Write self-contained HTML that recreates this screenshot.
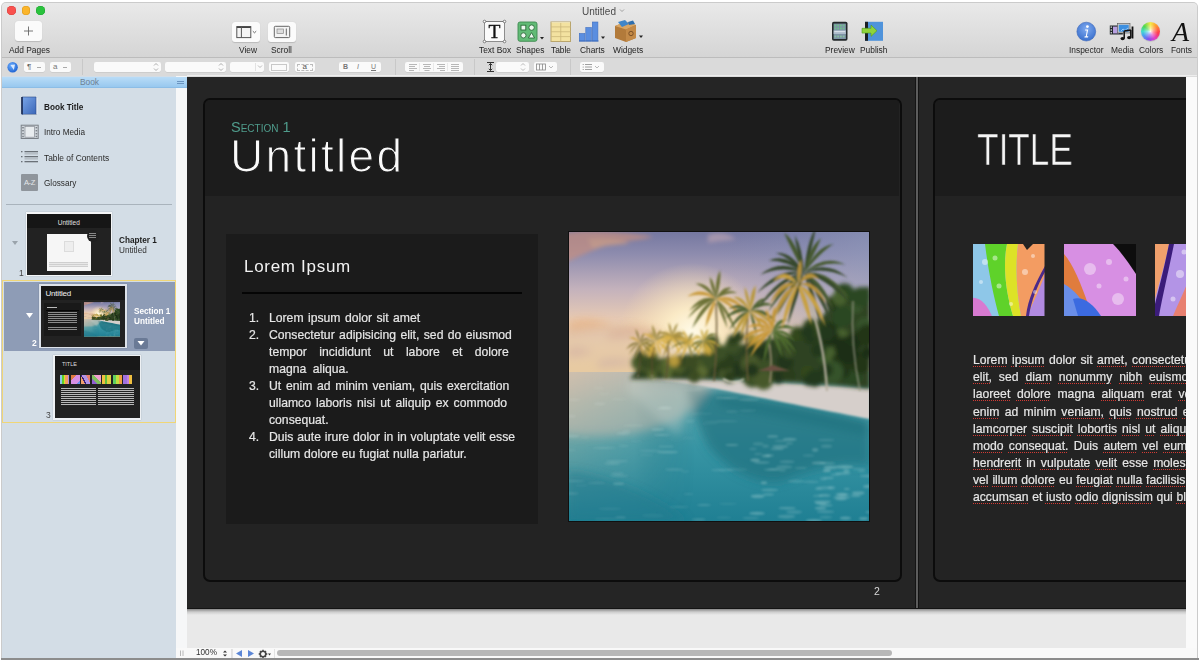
<!DOCTYPE html>
<html><head><meta charset="utf-8">
<style>
*{margin:0;padding:0;box-sizing:border-box}
html,body{width:1200px;height:660px;overflow:hidden;background:#fff}
body{font-family:"Liberation Sans",sans-serif;position:relative}
.a{position:absolute}
.lbl{position:absolute;font-size:8.4px;line-height:10px;color:#1e1e1e;white-space:nowrap;top:45px}
.btn{position:absolute;background:#fbfbfb;border-radius:3px;box-shadow:0 .5px 1px rgba(0,0,0,.15)}
.fbx{position:absolute;background:#fafafa;border-radius:2px;height:10px;top:62px;box-shadow:0 .5px .5px rgba(0,0,0,.12)}
.sep{position:absolute;width:1px;height:16px;top:59px;background:#c8c8c8}
.sb{position:absolute;font-size:8.2px;line-height:10px;color:#2a2a2a;white-space:nowrap}
.lbl,.sb,.w,.tx{will-change:transform}
.w{position:absolute;white-space:nowrap;line-height:1;-webkit-text-stroke:.2px currentColor}
.w u{text-decoration:underline dotted #d23a34;text-decoration-thickness:1px;text-underline-offset:2px}
</style></head><body>
<!-- window frame -->
<div class="a" style="left:1px;top:2px;width:1197px;height:658px;background:#cbcbcb;border-radius:5px 5px 0 0"></div>
<div class="a" style="left:2px;top:3px;width:1195px;height:656px;background:#dcdcdc;border-radius:4px 4px 0 0;overflow:hidden">
</div>
<!-- toolbar -->
<div id="tb" class="a" style="left:2px;top:3px;width:1195px;height:54px;background:linear-gradient(#e9e9e9,#d5d5d5);border-radius:4px 4px 0 0"></div>
<div class="a" style="left:2px;top:57px;width:1195px;height:1px;background:#bcbcbc"></div>

<!-- traffic lights -->
<div class="a" style="left:7.4px;top:6px;width:8.6px;height:8.6px;border-radius:50%;background:#f9514e;box-shadow:inset 0 0 0 .6px #d8403d"></div>
<div class="a" style="left:21.8px;top:6px;width:8.6px;height:8.6px;border-radius:50%;background:#fbb52a;box-shadow:inset 0 0 0 .6px #dc9a1e"></div>
<div class="a" style="left:36.2px;top:6px;width:8.6px;height:8.6px;border-radius:50%;background:#2ac33d;box-shadow:inset 0 0 0 .6px #1ea42f"></div>
<div class="a tx" style="left:569px;top:5.5px;width:60px;font-size:10px;line-height:12px;color:#4a4a4a;text-align:center">Untitled</div>
<svg class="a" style="left:619px;top:8px" width="6" height="5"><path d="M1 1.5 L3 3.5 L5 1.5" fill="none" stroke="#999" stroke-width=".9"/></svg>
<!-- Add pages -->
<div class="btn" style="left:15.3px;top:21.4px;width:26.3px;height:19.5px"></div>
<svg class="a" style="left:15px;top:21px" width="27" height="20"><path d="M13.5 5.5 V14.5 M9 10 H18" stroke="#666" stroke-width=".9"/></svg>
<div class="lbl" style="left:8.5px">Add Pages</div>
<!-- View / Scroll -->
<div class="btn" style="left:232.2px;top:21.5px;width:28px;height:20.4px"></div>
<svg class="a" style="left:232px;top:21px" width="29" height="21"><rect x="4.8" y="5.6" width="14" height="11" fill="#f4f4f4" stroke="#555" stroke-width="1"/><path d="M4.8 6.2 H18.8" stroke="#444" stroke-width="1.6"/><path d="M9.4 5.6 V16.6" stroke="#555" stroke-width="1"/><path d="M20.8 10.2 L22.5 11.8 L24.2 10.2" fill="none" stroke="#555" stroke-width=".9"/></svg>
<div class="lbl" style="left:238.6px">View</div>
<div class="btn" style="left:268.3px;top:21.5px;width:28px;height:20.4px"></div>
<svg class="a" style="left:268px;top:21px" width="29" height="21"><rect x="6.3" y="5.3" width="15.4" height="11.3" rx="1" fill="#f4f4f4" stroke="#666" stroke-width="1"/><rect x="9" y="8" width="6.5" height="4.5" fill="#ddd" stroke="#888" stroke-width=".7"/><path d="M18.3 7.5 V14.5" stroke="#666" stroke-width="1"/></svg>
<div class="lbl" style="left:270.5px">Scroll</div>
<!-- Text Box -->
<svg class="a" style="left:482px;top:19px" width="25" height="25"><rect x="2.5" y="2.5" width="20" height="20" fill="#fafafa" stroke="#777" stroke-width=".8"/><path d="M2.5 2.5 H22.5" stroke="#777" stroke-width=".8"/><g fill="#fff" stroke="#555" stroke-width=".7"><circle cx="2.5" cy="2.5" r="1.3"/><circle cx="22.5" cy="2.5" r="1.3"/><circle cx="2.5" cy="22.5" r="1.3"/><circle cx="22.5" cy="22.5" r="1.3"/></g><text x="12.5" y="19" text-anchor="middle" font-family="Liberation Serif" font-size="19.5" fill="#111" stroke="#111" stroke-width=".35">T</text></svg>
<div class="lbl" style="left:478.6px">Text Box</div>
<!-- Shapes -->
<svg class="a" style="left:517px;top:21px" width="28" height="22"><rect x="1" y="1" width="19" height="19.3" rx="2" fill="#62bb76" stroke="#3f8a50" stroke-width=".9"/><g fill="#eef8f0" stroke="#2d6a3a" stroke-width=".9"><rect x="4" y="4.2" width="4.8" height="4.8"/><circle cx="14.6" cy="6.6" r="2.7"/><circle cx="6.4" cy="14.4" r="2.6"/><path d="M14.5 11.6 L17.6 17 H11.4 Z"/></g><path d="M23 16 H27 L25 18.5 Z" fill="#222"/></svg>
<div class="lbl" style="left:516.1px">Shapes</div>
<!-- Table -->
<svg class="a" style="left:550px;top:21px" width="22" height="22"><rect x="1" y="1" width="19.5" height="19.5" fill="#f3e2a0" stroke="#b9a56c" stroke-width="1"/><g stroke="#cbb77a" stroke-width=".8"><path d="M10.75 1 V20.5"/><path d="M1 5.9 H20.5 M1 10.75 H20.5 M1 15.6 H20.5"/></g><path d="M1.5 1.5 H20" stroke="#fff6d0" stroke-width=".6"/></svg>
<div class="lbl" style="left:551px">Table</div>
<!-- Charts -->
<svg class="a" style="left:578px;top:20px" width="30" height="23"><g fill="#5a8ee0" stroke="#3f6fc0" stroke-width=".6"><rect x="1.3" y="13.5" width="5.6" height="7.5"/><rect x="7.8" y="7.5" width="5.6" height="13.5"/><rect x="14.3" y="2" width="5.6" height="19"/></g><rect x="1" y="20.5" width="19.5" height="1" fill="#3f6fc0"/><path d="M23 16.5 H27 L25 19 Z" fill="#222"/></svg>
<div class="lbl" style="left:579.5px">Charts</div>
<!-- Widgets -->
<svg class="a" style="left:613px;top:19px" width="32" height="25"><path d="M2 7 L12 3 L23 6 L23 19 L13 23 L2 19 Z" fill="#b27a3a"/><path d="M2 7 L13 10.5 L23 6 L12 3 Z" fill="#d9a664"/><path d="M13 10.5 V23 L23 19 V6 Z" fill="#c38a48"/><path d="M5 3 L12 1 L16 5 L9 8 Z" fill="#3f86c9"/><path d="M15 3 L20 1.5 L22 5 L16 6 Z" fill="#2f6fae"/><circle cx="18" cy="14.5" r="2.2" fill="none" stroke="#6b4420" stroke-width=".8"/><path d="M26 16.5 H30 L28 19 Z" fill="#222"/></svg>
<div class="lbl" style="left:612.5px">Widgets</div>
<!-- Preview -->
<svg class="a" style="left:831px;top:21px" width="18" height="21"><rect x="1" y=".8" width="15.5" height="19" rx="1.8" fill="#23282a"/><rect x="2.6" y="2.6" width="12.3" height="15.4" fill="#7d93a6"/><rect x="3.4" y="3.6" width="1.8" height="1.8" fill="#6fbf8a"/><rect x="6.2" y="3.6" width="1.8" height="1.8" fill="#6fbf8a"/><rect x="9.0" y="3.6" width="1.8" height="1.8" fill="#6fbf8a"/><rect x="11.8" y="3.6" width="1.8" height="1.8" fill="#6fbf8a"/><rect x="3.4" y="6.6" width="1.8" height="1.8" fill="#6fbf8a"/><rect x="6.2" y="6.6" width="1.8" height="1.8" fill="#6fbf8a"/><rect x="9.0" y="6.6" width="1.8" height="1.8" fill="#6fbf8a"/><rect x="11.8" y="6.6" width="1.8" height="1.8" fill="#6fbf8a"/><rect x="3.4" y="14.6" width="1.8" height="1.8" fill="#8ac0a0"/><rect x="6.2" y="14.6" width="1.8" height="1.8" fill="#8ac0a0"/><rect x="9.0" y="14.6" width="1.8" height="1.8" fill="#8ac0a0"/><rect x="11.8" y="14.6" width="1.8" height="1.8" fill="#8ac0a0"/><rect x="2.6" y="9.4" width="12.3" height="3.6" fill="#aebccb"/><rect x="3.3" y="10.3" width="10.8" height=".8" fill="#e8eef4"/></svg>
<div class="lbl" style="left:825px">Preview</div>
<!-- Publish -->
<svg class="a" style="left:861px;top:21px" width="24" height="21"><rect x="4" y=".8" width="18" height="19" fill="#4f93db"/><rect x="4" y=".8" width="3" height="19" fill="#1b1f22"/><path d="M1 7.3 H10 V4 L16 9.7 L10 15.4 V12.1 H1 Z" fill="#8fd43a" stroke="#4f9a1e" stroke-width=".6"/></svg>
<div class="lbl" style="left:860.3px">Publish</div>
<!-- Inspector -->
<svg class="a" style="left:1076px;top:21px" width="21" height="21"><defs><radialGradient id="ig" cx=".5" cy=".35" r=".6"><stop offset="0" stop-color="#7faaf0"/><stop offset="1" stop-color="#3f74cf"/></radialGradient></defs><circle cx="10.3" cy="10.6" r="9.4" fill="url(#ig)" stroke="#3a66b8" stroke-width=".6"/><circle cx="11.4" cy="5.6" r="1.4" fill="#fff"/><path d="M9.2 8.4 H12.2 L10.8 15.3 H12.3 L12 16.4 H8.4 L8.7 15.3 H9.8 L10.8 9.5 H9 Z" fill="#fff"/></svg>
<div class="lbl" style="left:1069.3px">Inspector</div>
<!-- Media -->
<svg class="a" style="left:1109px;top:22px" width="26" height="20"><rect x=".8" y="3.5" width="13" height="9" fill="#22282c"/><g fill="#e8e8e8"><rect x="1.6" y="4.5" width="1.4" height="1.2"/><rect x="1.6" y="7.4" width="1.4" height="1.2"/><rect x="1.6" y="10.2" width="1.4" height="1.2"/></g><rect x="4" y="4.6" width="6" height="6.8" fill="#b8a0e0"/><rect x="8.5" y="1.5" width="12.5" height="9.5" fill="#c8c8c8" stroke="#555" stroke-width=".6"/><rect x="9.8" y="2.8" width="9.9" height="6.9" fill="#3c8fe0"/><path d="M12 9 L14 7 L16 8.5 L19 6" stroke="#bfe0ff" stroke-width=".7" fill="none"/><path d="M15.2 9 V16.5 M21.8 8 V15.5 M15.2 9 L21.8 8" stroke="#111" stroke-width="1.5" fill="none"/><ellipse cx="13.6" cy="16.6" rx="2.1" ry="1.6" fill="#111"/><ellipse cx="20.2" cy="15.6" rx="2.1" ry="1.6" fill="#111"/><rect x="22.6" y="4.5" width="1.8" height="12" fill="#111"/></svg>
<div class="lbl" style="left:1110.5px">Media</div>
<!-- Colors -->
<div class="a" style="left:1140.6px;top:21.8px;width:19.6px;height:19.6px;border-radius:50%;background:radial-gradient(circle,rgba(255,255,255,.9) 0,rgba(255,255,255,.4) 25%,rgba(255,255,255,0) 55%),conic-gradient(from 0deg,#f5e84a,#ffa030 40deg,#ff3b4e 100deg,#e040c8 150deg,#8050f0 195deg,#4aa0f0 240deg,#40d8d0 270deg,#50d850 310deg,#f5e84a 360deg);box-shadow:0 .5px 1px rgba(0,0,0,.2)"></div>
<div class="lbl" style="left:1139px">Colors</div>
<!-- Fonts -->
<div class="a" style="left:1170.5px;top:18px;width:20px;font-family:'Liberation Serif',serif;font-style:italic;font-size:28px;line-height:28px;color:#111;text-align:center">A</div>
<div class="lbl" style="left:1170.5px">Fonts</div>

<!-- format bar -->
<div class="a" style="left:2px;top:58px;width:1195px;height:18px;background:#dadada"></div>
<div class="a" style="left:187px;top:75px;width:1010px;height:1.2px;background:#ededed"></div>

<div class="sep" style="left:82px"></div>
<svg class="a" style="left:7px;top:61px" width="12" height="12"><defs><radialGradient id="gl" cx=".4" cy=".35" r=".7"><stop offset="0" stop-color="#6fb0ff"/><stop offset="1" stop-color="#1a5fd0"/></radialGradient></defs><circle cx="5.6" cy="6.3" r="5.2" fill="url(#gl)"/><path d="M3.5 4 L8 3.5 L6.8 9 Z" fill="#e8f2ff" opacity=".9"/></svg>
<div class="fbx" style="left:24.2px;width:20.8px"></div>
<div class="a" style="left:27px;top:61.5px;font-size:8px;color:#666">&para;</div>
<div class="a" style="left:37px;top:66.5px;width:4px;height:1px;background:#aaa"></div>
<div class="fbx" style="left:50px;width:20.8px"></div>
<div class="a" style="left:53px;top:61.5px;font-size:8px;color:#777">a</div>
<div class="a" style="left:63px;top:66.5px;width:4px;height:1px;background:#aaa"></div>
<div class="fbx" style="left:93.5px;width:67.3px"></div>
<div class="fbx" style="left:165.4px;width:60.4px"></div>
<svg class="a" style="left:153px;top:62px" width="6" height="10"><path d="M1 3.5 L3 1.5 L5 3.5 M1 6.5 L3 8.5 L5 6.5" fill="none" stroke="#999" stroke-width=".8"/></svg>
<svg class="a" style="left:218px;top:62px" width="6" height="10"><path d="M1 3.5 L3 1.5 L5 3.5 M1 6.5 L3 8.5 L5 6.5" fill="none" stroke="#999" stroke-width=".8"/></svg>
<div class="fbx" style="left:230px;width:34.4px"></div>
<div class="a" style="left:255px;top:63px;width:1px;height:8px;background:#e2e2e2"></div>
<svg class="a" style="left:257px;top:64px" width="6" height="5"><path d="M1 1.5 L3 3.5 L5 1.5" fill="none" stroke="#aaa" stroke-width=".8"/></svg>
<div class="fbx" style="left:268.5px;width:20.9px"></div>
<div class="a" style="left:271px;top:63.5px;width:16px;height:7px;border:1px solid #c8c8c8"></div>
<div class="fbx" style="left:294.6px;width:20.8px"></div>
<div class="a" style="left:297px;top:63.5px;width:16px;height:7px;border:1px dashed #bbb"></div>
<div class="a" style="left:302.5px;top:61.5px;font-size:8px;color:#555">a</div>
<div class="fbx" style="left:338.8px;width:42.5px"></div>
<div class="a" style="left:343px;top:62.5px;font-size:7px;color:#777;font-weight:bold">B</div>
<div class="a" style="left:357px;top:62.5px;font-size:7px;color:#777;font-style:italic">I</div>
<div class="a" style="left:371px;top:62.5px;font-size:7px;color:#777;text-decoration:underline">U</div>
<div class="sep" style="left:395px"></div>
<div class="fbx" style="left:405px;width:57.5px"></div>
<svg class="a" style="left:405px;top:62px" width="58" height="10"><g stroke="#999" stroke-width=".7"><path d="M4 2.5 H12 M4 4.5 H10 M4 6.5 H12 M4 8.5 H9"/><path d="M18 2.5 H26 M19 4.5 H25 M18 6.5 H26 M19.5 8.5 H24.5"/><path d="M32 2.5 H40 M34 4.5 H40 M32 6.5 H40 M35 8.5 H40"/><path d="M46 2.5 H54 M46 4.5 H54 M46 6.5 H54 M46 8.5 H54"/></g><g stroke="#e4e4e4" stroke-width=".8"><path d="M14.5 1 V9 M28.5 1 V9 M42.5 1 V9"/></g></svg>
<div class="sep" style="left:473.7px"></div>
<svg class="a" style="left:485px;top:61px" width="11" height="12"><path d="M2 1.5 H9 M2 10.5 H9 M5.5 2.5 V9.5 M3.8 4.2 L5.5 2.5 L7.2 4.2 M3.8 7.8 L5.5 9.5 L7.2 7.8" fill="none" stroke="#333" stroke-width="1"/></svg>
<div class="fbx" style="left:496px;width:32.7px"></div>
<svg class="a" style="left:520px;top:62px" width="6" height="10"><path d="M1 3.5 L3 1.5 L5 3.5 M1 6.5 L3 8.5 L5 6.5" fill="none" stroke="#aaa" stroke-width=".8"/></svg>
<div class="fbx" style="left:533.7px;width:23.8px"></div>
<svg class="a" style="left:535px;top:62px" width="22" height="10"><rect x="1.5" y="2" width="9" height="6" fill="none" stroke="#888" stroke-width=".8"/><path d="M4.5 2 V8 M7.5 2 V8" stroke="#888" stroke-width=".8"/><path d="M14 4 L16 6 L18 4" fill="none" stroke="#aaa" stroke-width=".8"/></svg>
<div class="sep" style="left:570px"></div>
<div class="fbx" style="left:580px;width:23.7px"></div>
<svg class="a" style="left:581px;top:62px" width="22" height="10"><g stroke="#888" stroke-width=".8"><path d="M4 2.5 H11 M4 5 H11 M4 7.5 H11"/></g><g fill="#888"><circle cx="2.2" cy="2.5" r=".6"/><circle cx="2.2" cy="5" r=".6"/><circle cx="2.2" cy="7.5" r=".6"/></g><path d="M14 4 L16 6 L18 4" fill="none" stroke="#aaa" stroke-width=".8"/></svg>

<!-- sidebar -->
<div class="a" style="left:2px;top:76px;width:174px;height:572px;background:#d3dde6"></div>
<div class="a" style="left:176px;top:76px;width:11px;height:572px;background:#f6f7f8"></div>

<div class="a" style="left:2px;top:76.5px;width:185px;height:11.5px;background:linear-gradient(#b9dcf7,#98c8ef);border-bottom:1px solid #8cbde6"></div>
<div class="a" style="left:2px;top:76.5px;width:175px;height:12px;font-size:8.4px;line-height:11.5px;color:#6e8092;text-align:center">Book</div>
<div class="a" style="left:176.5px;top:80.8px;width:7.5px;height:1px;background:#6a94c0"></div><div class="a" style="left:176.5px;top:83px;width:7.5px;height:1px;background:#6a94c0"></div>
<!-- book items -->
<svg class="a" style="left:20px;top:96px" width="20" height="20"><defs><linearGradient id="bk" x1="0" y1="0" x2="1" y2="1"><stop offset="0" stop-color="#7aa6e8"/><stop offset="1" stop-color="#3b66b8"/></linearGradient></defs><path d="M3 1.5 H16.5 L17.5 2.5 V18.8 H3 Z" fill="#e8edf5"/><path d="M2 1 H16 V18.3 H2 Z" fill="url(#bk)" stroke="#2a4c8c" stroke-width=".6"/><path d="M2 1 V18.3" stroke="#1a2a50" stroke-width="1.6"/><path d="M3 18.3 H16.5 L17.5 19 H3.5 Z" fill="#9aa6b8"/></svg>
<div class="sb" style="left:43.6px;top:102.5px;font-weight:bold;color:#1c1c1c">Book Title</div>
<svg class="a" style="left:20px;top:124px" width="20" height="16"><rect x="1.2" y="1.2" width="17" height="13.3" fill="#d0d6dc" stroke="#7b8188" stroke-width="1"/><rect x="5" y="2.5" width="9.4" height="10.7" fill="#e8ecef" stroke="#8a9097" stroke-width=".7"/><g fill="#7b8188"><rect x="2.2" y="3" width="1.6" height="1.4"/><rect x="2.2" y="6" width="1.6" height="1.4"/><rect x="2.2" y="9" width="1.6" height="1.4"/><rect x="2.2" y="11.8" width="1.6" height="1.4"/><rect x="15.6" y="3" width="1.6" height="1.4"/><rect x="15.6" y="6" width="1.6" height="1.4"/><rect x="15.6" y="9" width="1.6" height="1.4"/><rect x="15.6" y="11.8" width="1.6" height="1.4"/></g></svg>
<div class="sb" style="left:43.6px;top:128px">Intro Media</div>
<svg class="a" style="left:20px;top:150px" width="20" height="14"><g fill="#6b7178"><rect x="1" y="1" width="1.5" height="1.3"/><rect x="1" y="6" width="1.5" height="1.3"/><rect x="1" y="11" width="1.5" height="1.3"/><rect x="4.5" y="1" width="13.5" height="1.3"/><rect x="4.5" y="6" width="13.5" height="1.3"/><rect x="4.5" y="11" width="13.5" height="1.3"/></g><g fill="#9aa0a6"><rect x="4.5" y="3.5" width="13.5" height=".8"/><rect x="4.5" y="8.5" width="13.5" height=".8"/></g></svg>
<div class="sb" style="left:43.6px;top:153px;font-size:8.4px">Table of Contents</div>
<div class="a" style="left:21px;top:174px;width:17px;height:17px;background:#8f959c;border-radius:1px;color:#e4e7ea;font-size:7.5px;line-height:17px;text-align:center;letter-spacing:-.3px">A-Z</div>
<div class="sb" style="left:43.6px;top:179px">Glossary</div>
<div class="a" style="left:6px;top:204px;width:166px;height:1px;background:#a9b3bc"></div>
<!-- chapter 1 -->
<svg class="a" style="left:11px;top:240px" width="8" height="6"><path d="M1 1 H7 L4 5 Z" fill="#9aa3ab"/></svg>
<div class="sb" style="left:19px;top:267.5px;color:#444;font-size:8.5px">1</div>
<div class="a" style="left:25.5px;top:212.4px;width:86.5px;height:63.8px;background:#f4f6f8;box-shadow:0 0 1px rgba(0,0,0,.25)"></div>
<div class="a" style="left:26.5px;top:214px;width:84.5px;height:61px;background:#222;overflow:hidden">
  <div class="a" style="left:0;top:0;width:84.5px;height:13.6px;background:#161616"></div>
  <div class="a" style="left:0;top:5px;width:84.5px;text-align:center;font-size:6.5px;line-height:7px;color:#e0e0e0">Untitled</div>
  <div class="a" style="left:20.2px;top:19.6px;width:44.2px;height:37.1px;background:#f6f6f6"></div>
  <div class="a" style="left:37.1px;top:26.7px;width:10.9px;height:10.9px;border:1.5px solid #dcdcdc;background:#eee"></div>
  <div class="a" style="left:22.9px;top:48px;width:38.8px;height:4.9px;background:repeating-linear-gradient(#cfcfcf 0 1px,#e8e8e8 1px 2px)"></div>
  <div class="a" style="left:60px;top:15.8px;width:12px;height:12px;border-radius:50%;background:#202020"></div>
  <div class="a" style="left:62.5px;top:18.5px;width:7px;height:6px;background:repeating-linear-gradient(#888 0 .8px,transparent .8px 2px)"></div>
</div>
<div class="sb" style="left:119.2px;top:235.5px;font-weight:bold;color:#1c1c1c">Chapter 1</div>
<div class="sb" style="left:119.2px;top:246px;color:#333">Untitled</div>
<!-- selection -->
<div class="a" style="left:2.3px;top:280.3px;width:174px;height:142.6px;border:1.8px solid #f0d676;background:#d3dde6"></div>
<div class="a" style="left:3.9px;top:281.9px;width:170.8px;height:69.1px;background:#8e9cb6"></div>
<svg class="a" style="left:25px;top:312px" width="9" height="7"><path d="M1 1 H8 L4.5 6 Z" fill="#fff"/></svg>
<div class="sb" style="left:31.5px;top:337.5px;color:#fff;font-size:8.5px;font-weight:bold">2</div>
<div class="a" style="left:39.3px;top:283.8px;width:87.7px;height:64.2px;background:#dde2ea;box-shadow:0 0 1px rgba(0,0,0,.25)"></div>
<div class="a" style="left:40.9px;top:285.5px;width:84px;height:61px;background:#222;overflow:hidden">
  <div class="a" style="left:0;top:0;width:84px;height:14.5px;background:#171717"></div>
  <div class="a" style="left:4.6px;top:4.8px;font-size:8px;line-height:8px;color:#f0f0f0;letter-spacing:-.2px">Untitled</div>
  <div class="a" style="left:3.3px;top:17.9px;width:36.5px;height:32.2px;background:#191919"></div>
  <div class="a" style="left:6px;top:21px;width:10px;height:1.3px;background:#bbb"></div>
  <div class="a" style="left:5px;top:24px;width:33px;height:.8px;background:#050505"></div>
  <div class="a" style="left:7px;top:26px;width:29px;height:19px;background:repeating-linear-gradient(#8a8a8a 0 .9px,transparent .9px 2.1px);filter:blur(.3px)"></div>
  <svg class="a" style="left:43.6px;top:16.9px" width="36" height="34.9" viewBox="0 0 302 291"><use href="#photoG"/></svg>
</div>
<div class="sb" style="left:134px;top:306.5px;font-weight:bold;color:#fff">Section 1</div>
<div class="sb" style="left:134px;top:316.5px;font-weight:bold;color:#fff">Untitled</div>
<div class="a" style="left:134px;top:337.5px;width:14px;height:11.4px;background:#6a7a96;border-radius:2px"></div>
<svg class="a" style="left:136px;top:340px" width="10" height="7"><path d="M1.5 1 H8.5 L5 5.6 Z" fill="#fff"/></svg>
<div class="sb" style="left:46px;top:410px;color:#444;font-size:8.5px">3</div>
<div class="a" style="left:53.3px;top:354.7px;width:87.7px;height:64.9px;background:#eef1f4;box-shadow:0 0 1px rgba(0,0,0,.25)"></div>
<div class="a" style="left:54.9px;top:356.4px;width:85.1px;height:61.6px;background:#212121;overflow:hidden">
  <div class="a" style="left:0;top:0;width:85.1px;height:14px;background:#181818"></div>
  <div class="a" style="left:7px;top:5.5px;font-size:5.5px;line-height:5px;color:#ddd">TITLE</div>
  <div class="a" style="left:5.5px;top:18.6px;width:9px;height:9.2px;background:linear-gradient(90deg,#8ec7e8 0 20%,#5ed22a 20% 45%,#dde225 45% 60%,#f39c62 60% 85%,#b18ae0 85%)"></div>
  <div class="a" style="left:16px;top:18.6px;width:9px;height:9.2px;background:linear-gradient(135deg,#e07b3e 0 30%,#d78fe3 30% 80%,#6a8ee8 80%)"></div>
  <div class="a" style="left:26.5px;top:18.6px;width:9px;height:9.2px;background:linear-gradient(60deg,#f0a06c 0 30%,#3b1f7a 30% 40%,#b394e6 40% 70%,#e88070 70%)"></div>
  <div class="a" style="left:37px;top:18.6px;width:9px;height:9.2px;background:linear-gradient(45deg,#9060d0 0 30%,#80c060 30% 60%,#f0a0d0 60%)"></div>
  <div class="a" style="left:47.5px;top:18.6px;width:9px;height:9.2px;background:linear-gradient(90deg,#f0c040 0 30%,#60c040 30% 60%,#e0d040 60%)"></div>
  <div class="a" style="left:58px;top:18.6px;width:9px;height:9.2px;background:linear-gradient(90deg,#60d060 0 35%,#c0e040 35% 65%,#f0a040 65%)"></div>
  <div class="a" style="left:68.5px;top:18.6px;width:9px;height:9.2px;background:linear-gradient(90deg,#a070e0 0 40%,#c080e0 40% 70%,#f0c040 70%)"></div>
  <div class="a" style="left:6px;top:32px;width:35px;height:18px;background:repeating-linear-gradient(#b8b8b8 0 1px,transparent 1px 2px);filter:blur(.35px)"></div>
  <div class="a" style="left:43.6px;top:32px;width:35.5px;height:18px;background:repeating-linear-gradient(#b8b8b8 0 1px,transparent 1px 2px);filter:blur(.35px)"></div>
</div>
<!-- canvas -->
<div class="a" style="left:187px;top:77px;width:999px;height:532px;background:#252525;overflow:hidden">
<div class="a" style="left:16px;top:21px;width:699px;height:484px;border:2px solid #0c0c0c;border-radius:7px;background:#232323;overflow:hidden">
    <div class="a" style="left:0;top:0;width:694px;height:96px;background:#1c1c1c"></div>
  </div>
  <div class="a" style="left:728px;top:0;width:4px;height:532px;background:linear-gradient(90deg,#141414 0 1px,#5c5c5c 1px 3px,#141414 3px 4px)"></div>
  <div class="a" style="left:0;top:531px;width:999px;height:1px;background:#141414"></div>
  <div class="a" style="left:746px;top:21px;width:600px;height:484px;border:2px solid #0c0c0c;border-radius:7px;background:#232323;overflow:hidden">
    <div class="a" style="left:0;top:0;width:596px;height:96px;background:#1c1c1c"></div>
  </div>
  <div class="a tx" style="left:687px;top:508px;font-size:10.5px;line-height:12px;color:#d8d8d8">2</div>
<div class="a tx" style="left:44px;top:41.5px;font-size:14.5px;line-height:16px;color:#4f9c8c;letter-spacing:0px;white-space:nowrap">S<span style="font-size:10px">ECTION</span> 1</div>
<div class="a tx" style="left:42.5px;top:54px;font-size:46px;line-height:50px;color:#fafafa;letter-spacing:2.3px;white-space:nowrap;-webkit-text-stroke:1.1px #1c1c1c">Untitled</div>
<div class="a" style="left:39px;top:157px;width:312px;height:290px;background:#1b1b1b"></div>
<div class="a tx" style="left:56.5px;top:180px;font-size:17px;line-height:20px;color:#f2f2f2;letter-spacing:.7px;white-space:nowrap">Lorem Ipsum</div>
<div class="a" style="left:55px;top:215px;width:280px;height:2px;background:#050505"></div>
<span class="w" style="left:61.5px;top:234.67px;font-size:12.2px;color:#e6e6e6;word-spacing:0.00px;">1.</span>
<span class="w" style="left:81.7px;top:234.67px;font-size:12.2px;color:#e6e6e6;word-spacing:1.03px;">Lorem ipsum dolor sit amet</span>
<span class="w" style="left:61.5px;top:251.67px;font-size:12.2px;color:#e6e6e6;word-spacing:0.00px;">2.</span>
<span class="w" style="left:81.7px;top:251.67px;font-size:12.2px;color:#e6e6e6;word-spacing:1.01px;">Consectetur adipisicing elit, sed do eiusmod</span>
<span class="w" style="left:81.7px;top:268.67px;font-size:12.2px;color:#e6e6e6;word-spacing:9.05px;">tempor incididunt ut labore et dolore</span>
<span class="w" style="left:81.7px;top:285.67px;font-size:12.2px;color:#e6e6e6;word-spacing:3.04px;">magna aliqua.</span>
<span class="w" style="left:61.5px;top:302.67px;font-size:12.2px;color:#e6e6e6;word-spacing:0.00px;">3.</span>
<span class="w" style="left:81.7px;top:302.67px;font-size:12.2px;color:#e6e6e6;word-spacing:1.33px;">Ut enim ad minim veniam, quis exercitation</span>
<span class="w" style="left:81.7px;top:319.67px;font-size:12.2px;color:#e6e6e6;word-spacing:1.64px;">ullamco laboris nisi ut aliquip ex commodo</span>
<span class="w" style="left:81.7px;top:336.67px;font-size:12.2px;color:#e6e6e6;word-spacing:0.00px;">consequat.</span>
<span class="w" style="left:61.5px;top:353.67px;font-size:12.2px;color:#e6e6e6;word-spacing:0.00px;">4.</span>
<span class="w" style="left:81.7px;top:353.67px;font-size:12.2px;color:#e6e6e6;word-spacing:0.44px;">Duis aute irure dolor in in voluptate velit esse</span>
<span class="w" style="left:81.7px;top:370.67px;font-size:12.2px;color:#e6e6e6;word-spacing:0.52px;">cillum dolore eu fugiat nulla pariatur.</span>
<svg class="a" style="left:381px;top:154px" width="302" height="291" viewBox="0 0 302 291">
<defs>
<linearGradient id="sky" x1="0" y1="0" x2="0" y2="1"><stop offset="0" stop-color="#7477a0"/><stop offset=".08" stop-color="#8e8cae"/><stop offset=".2" stop-color="#c4b2bc"/><stop offset=".3" stop-color="#e6cab4"/><stop offset=".4" stop-color="#f3d5a6"/><stop offset=".48" stop-color="#f5d698"/></linearGradient>
<radialGradient id="sun" cx=".41" cy=".35" r=".24"><stop offset="0" stop-color="#fffbea"/><stop offset=".35" stop-color="#fdeec8" stop-opacity=".9"/><stop offset="1" stop-color="#f6dcae" stop-opacity="0"/></radialGradient>
<linearGradient id="skyR" x1="0" y1="0" x2="1" y2="0"><stop offset=".5" stop-color="#8890b8" stop-opacity="0"/><stop offset="1" stop-color="#909abd" stop-opacity=".6"/></linearGradient>
<linearGradient id="wat" x1="0" y1="0" x2="0" y2="1"><stop offset="0" stop-color="#8fb4b6"/><stop offset=".2" stop-color="#5aa6ae"/><stop offset=".5" stop-color="#3895a4"/><stop offset="1" stop-color="#1f7f93"/></linearGradient>
<linearGradient id="refl" x1="0" y1="0" x2="1" y2="0"><stop offset="0" stop-color="#e8c8a8" stop-opacity=".65"/><stop offset=".22" stop-color="#d8c8b0" stop-opacity=".35"/><stop offset=".42" stop-color="#000" stop-opacity="0"/></linearGradient>
<linearGradient id="reflV" x1="0" y1="0" x2="0" y2="1"><stop offset="0" stop-color="#fff" stop-opacity="1"/><stop offset=".5" stop-color="#fff" stop-opacity=".4"/><stop offset="1" stop-color="#fff" stop-opacity="0"/></linearGradient>
<mask id="rm"><rect x="0" y="141" width="302" height="150" fill="url(#reflV)"/></mask>
<filter id="b1" x="-20%" y="-20%" width="140%" height="140%"><feGaussianBlur stdDeviation=".9"/></filter>
<filter id="b1b" x="-20%" y="-20%" width="140%" height="140%"><feGaussianBlur stdDeviation="1.3"/></filter>
<filter id="b2" x="-20%" y="-20%" width="140%" height="140%"><feGaussianBlur stdDeviation="2"/></filter>
<filter id="b3" x="-30%" y="-30%" width="160%" height="160%"><feGaussianBlur stdDeviation="5"/></filter>
<clipPath id="pc"><rect width="302" height="291"/></clipPath>
</defs>
<g id="photoG" clip-path="url(#pc)">
<rect width="302" height="291" fill="url(#sky)"/>
<rect width="302" height="150" fill="url(#skyR)"/>
<rect width="302" height="291" fill="url(#sun)"/>
<g filter="url(#b2)" opacity=".7"><path d="M-5 2 C15 -2 40 0 60 2 C70 4 78 3 85 6 C70 10 55 9 40 14 C25 18 12 26 -5 32 Z" fill="#c89080"/><path d="M20 8 C35 6 50 8 62 12 C50 14 38 14 25 18 Z" fill="#d8a080"/><path d="M140 4 C150 0 160 2 168 8 C158 10 150 10 140 12 Z" fill="#b8a0b0"/></g>
<g filter="url(#b3)" opacity=".75"><path d="M0 92 C15 86 30 88 45 96 C30 100 15 100 0 104 Z" fill="#e8b080"/><path d="M40 100 C60 94 80 96 100 104 C80 106 60 106 40 108 Z" fill="#dba888"/><path d="M0 118 C10 116 20 118 25 122 C15 124 8 124 0 126 Z" fill="#c8a098"/><path d="M30 130 C45 126 60 128 70 133 C55 135 42 135 30 137 Z" fill="#c8a8a0"/></g>
<!-- water -->
<path d="M0 141 H302 V291 H0 Z" fill="url(#wat)"/>
<rect x="0" y="141" width="302" height="150" fill="url(#refl)" mask="url(#rm)"/>
<g filter="url(#b3)">
<path d="M118 158 C160 160 220 172 302 190 V235 C270 230 240 240 215 250 C190 255 160 240 140 215 C130 195 125 175 118 158 Z" fill="#1f7482" opacity=".75"/>
<ellipse cx="30" cy="150" rx="110" ry="55" fill="#d8bcae" opacity=".45"/>
<path d="M150 160 C200 165 250 175 302 190 V205 C250 195 200 185 150 175 Z" fill="#1f6f7c" opacity=".6"/>
<path d="M60 150 C80 150 100 152 118 156 C122 175 118 190 110 205 C95 195 80 175 60 160 Z" fill="#c8d8d0" opacity=".35"/>
<path d="M0 240 C40 245 90 265 120 291 H0 Z" fill="#1f7a8e" opacity=".5"/>
</g>
<g filter="url(#b1)"><ellipse cx="209.3" cy="218.0" rx="6.9" ry="0.9" fill="#d8f0ec" opacity="0.22"/>
<ellipse cx="212.4" cy="210.0" rx="6.0" ry="0.8" fill="#d8f0ec" opacity="0.20"/>
<ellipse cx="190.2" cy="212.8" rx="5.5" ry="1.6" fill="#d8f0ec" opacity="0.14"/>
<ellipse cx="201.7" cy="259.0" rx="8.7" ry="1.4" fill="#d8f0ec" opacity="0.20"/>
<ellipse cx="258.2" cy="209.0" rx="8.2" ry="1.1" fill="#d8f0ec" opacity="0.15"/>
<ellipse cx="193.8" cy="231.5" rx="7.9" ry="1.0" fill="#d8f0ec" opacity="0.23"/>
<ellipse cx="232.9" cy="237.0" rx="6.3" ry="0.9" fill="#d8f0ec" opacity="0.14"/>
<ellipse cx="200.4" cy="263.5" rx="5.6" ry="1.1" fill="#d8f0ec" opacity="0.23"/>
<ellipse cx="219.0" cy="230.8" rx="7.8" ry="1.5" fill="#d8f0ec" opacity="0.17"/>
<ellipse cx="228.1" cy="250.2" rx="8.3" ry="1.5" fill="#d8f0ec" opacity="0.17"/>
<ellipse cx="258.5" cy="215.2" rx="5.5" ry="1.6" fill="#d8f0ec" opacity="0.15"/>
<ellipse cx="221.7" cy="208.4" rx="7.0" ry="1.6" fill="#d8f0ec" opacity="0.23"/>
<ellipse cx="250.7" cy="232.0" rx="7.2" ry="1.4" fill="#d8f0ec" opacity="0.23"/>
<ellipse cx="219.2" cy="277.2" rx="8.7" ry="1.3" fill="#d8f0ec" opacity="0.24"/>
<ellipse cx="189.6" cy="265.3" rx="6.9" ry="1.8" fill="#d8f0ec" opacity="0.27"/>
<ellipse cx="206.3" cy="238.2" rx="7.0" ry="0.8" fill="#d8f0ec" opacity="0.20"/>
<ellipse cx="197.6" cy="215.1" rx="3.4" ry="1.6" fill="#d8f0ec" opacity="0.15"/>
<ellipse cx="203.6" cy="238.6" rx="8.2" ry="0.9" fill="#d8f0ec" opacity="0.20"/>
<ellipse cx="226.2" cy="281.0" rx="7.9" ry="1.7" fill="#d8f0ec" opacity="0.17"/>
<ellipse cx="216.1" cy="235.9" rx="8.3" ry="1.8" fill="#d8f0ec" opacity="0.15"/>
<ellipse cx="198.2" cy="224.9" rx="4.4" ry="1.3" fill="#d8f0ec" opacity="0.23"/>
<ellipse cx="204.7" cy="205.4" rx="5.5" ry="1.2" fill="#d8f0ec" opacity="0.23"/>
<ellipse cx="256.5" cy="264.4" rx="6.1" ry="1.4" fill="#d8f0ec" opacity="0.24"/>
<ellipse cx="189.0" cy="282.4" rx="7.7" ry="1.7" fill="#d8f0ec" opacity="0.27"/>
<ellipse cx="214.4" cy="239.3" rx="3.6" ry="1.4" fill="#d8f0ec" opacity="0.14"/>
<ellipse cx="190.1" cy="223.0" rx="4.0" ry="1.1" fill="#d8f0ec" opacity="0.14"/>
<ellipse cx="185.0" cy="218.0" rx="3.6" ry="1.2" fill="#d8f0ec" opacity="0.13"/>
<ellipse cx="250.6" cy="257.8" rx="3.9" ry="1.1" fill="#d8f0ec" opacity="0.18"/>
<ellipse cx="212.3" cy="215.6" rx="8.1" ry="1.8" fill="#d8f0ec" opacity="0.20"/>
<ellipse cx="221.3" cy="212.4" rx="3.6" ry="1.1" fill="#d8f0ec" opacity="0.17"/>
<ellipse cx="247.2" cy="218.9" rx="3.1" ry="1.8" fill="#d8f0ec" opacity="0.21"/>
<ellipse cx="196.0" cy="251.7" rx="3.2" ry="1.3" fill="#d8f0ec" opacity="0.29"/>
<ellipse cx="249.7" cy="264.9" rx="4.6" ry="1.2" fill="#d8f0ec" opacity="0.15"/>
<ellipse cx="242.9" cy="250.8" rx="7.7" ry="1.1" fill="#d8f0ec" opacity="0.17"/>
<ellipse cx="245.9" cy="289.7" rx="8.1" ry="1.6" fill="#d8f0ec" opacity="0.27"/>
<ellipse cx="240.5" cy="224.5" rx="6.1" ry="1.2" fill="#d8f0ec" opacity="0.13"/>
<ellipse cx="187.1" cy="229.0" rx="4.6" ry="1.5" fill="#d8f0ec" opacity="0.29"/>
<ellipse cx="218.5" cy="285.6" rx="8.9" ry="1.8" fill="#d8f0ec" opacity="0.19"/>
<ellipse cx="201.5" cy="224.5" rx="4.2" ry="1.0" fill="#d8f0ec" opacity="0.23"/>
<ellipse cx="252.5" cy="277.3" rx="5.9" ry="1.5" fill="#d8f0ec" opacity="0.27"/>
<ellipse cx="254.4" cy="271.0" rx="8.5" ry="1.6" fill="#d8f0ec" opacity="0.26"/>
<ellipse cx="274.9" cy="242.5" rx="7.7" ry="1.1" fill="#d8f0ec" opacity="0.27"/>
<ellipse cx="300.5" cy="255.4" rx="5.4" ry="1.7" fill="#d8f0ec" opacity="0.25"/>
<ellipse cx="258.8" cy="239.5" rx="3.9" ry="1.7" fill="#d8f0ec" opacity="0.27"/>
<ellipse cx="257.6" cy="280.8" rx="8.9" ry="1.5" fill="#d8f0ec" opacity="0.18"/>
<ellipse cx="278.5" cy="239.7" rx="3.1" ry="1.8" fill="#d8f0ec" opacity="0.24"/>
<ellipse cx="277.4" cy="287.1" rx="5.6" ry="1.7" fill="#d8f0ec" opacity="0.27"/>
<ellipse cx="261.0" cy="246.9" rx="4.8" ry="1.0" fill="#d8f0ec" opacity="0.23"/>
<ellipse cx="263.5" cy="256.7" rx="3.8" ry="1.7" fill="#d8f0ec" opacity="0.18"/>
<ellipse cx="273.8" cy="266.4" rx="8.4" ry="1.2" fill="#d8f0ec" opacity="0.28"/>
<ellipse cx="276.1" cy="263.4" rx="6.1" ry="0.8" fill="#d8f0ec" opacity="0.20"/>
<ellipse cx="259.5" cy="232.2" rx="7.8" ry="1.0" fill="#d8f0ec" opacity="0.21"/>
<ellipse cx="287.7" cy="264.8" rx="5.0" ry="1.3" fill="#d8f0ec" opacity="0.22"/>
<ellipse cx="290.8" cy="238.3" rx="6.4" ry="1.0" fill="#d8f0ec" opacity="0.17"/>
<ellipse cx="290.2" cy="262.0" rx="6.4" ry="1.6" fill="#d8f0ec" opacity="0.28"/>
<ellipse cx="273.0" cy="268.1" rx="6.0" ry="1.3" fill="#d8f0ec" opacity="0.24"/>
<ellipse cx="273.5" cy="263.5" rx="5.9" ry="1.7" fill="#d8f0ec" opacity="0.24"/>
<ellipse cx="295.6" cy="287.6" rx="4.6" ry="1.4" fill="#d8f0ec" opacity="0.29"/>
<ellipse cx="293.7" cy="240.1" rx="3.7" ry="1.2" fill="#d8f0ec" opacity="0.14"/>
<ellipse cx="262.5" cy="236.3" rx="7.0" ry="1.6" fill="#d8f0ec" opacity="0.28"/>
<ellipse cx="258.0" cy="274.3" rx="7.0" ry="0.9" fill="#d8f0ec" opacity="0.28"/>
<ellipse cx="300.3" cy="245.0" rx="8.7" ry="1.2" fill="#d8f0ec" opacity="0.21"/>
<ellipse cx="301.5" cy="281.1" rx="4.0" ry="1.2" fill="#d8f0ec" opacity="0.21"/>
<ellipse cx="267.6" cy="243.5" rx="4.9" ry="1.5" fill="#d8f0ec" opacity="0.13"/>
<ellipse cx="278.8" cy="258.0" rx="3.1" ry="1.1" fill="#d8f0ec" opacity="0.23"/>
<ellipse cx="276.6" cy="235.8" rx="8.9" ry="1.6" fill="#d8f0ec" opacity="0.29"/>
<ellipse cx="255.4" cy="247.7" rx="3.2" ry="1.6" fill="#d8f0ec" opacity="0.17"/>
<ellipse cx="256.7" cy="256.9" rx="8.5" ry="1.6" fill="#d8f0ec" opacity="0.17"/>
<ellipse cx="257.8" cy="286.2" rx="6.4" ry="1.5" fill="#d8f0ec" opacity="0.14"/>
<ellipse cx="253.0" cy="272.6" rx="5.6" ry="0.9" fill="#d8f0ec" opacity="0.29"/>
<ellipse cx="120.5" cy="263.0" rx="4.7" ry="1.1" fill="#e8f4f0" opacity="0.09"/>
<ellipse cx="163.9" cy="214.0" rx="6.7" ry="0.9" fill="#e8f4f0" opacity="0.21"/>
<ellipse cx="50.9" cy="168.2" rx="8.2" ry="0.7" fill="#e8f4f0" opacity="0.10"/>
<ellipse cx="30.7" cy="157.1" rx="5.6" ry="0.7" fill="#e8f4f0" opacity="0.12"/>
<ellipse cx="144.3" cy="190.9" rx="8.0" ry="0.6" fill="#e8f4f0" opacity="0.13"/>
<ellipse cx="3.5" cy="185.3" rx="4.1" ry="1.0" fill="#e8f4f0" opacity="0.16"/>
<ellipse cx="36.0" cy="216.9" rx="11.5" ry="0.6" fill="#e8f4f0" opacity="0.19"/>
<ellipse cx="82.1" cy="219.8" rx="10.7" ry="0.8" fill="#e8f4f0" opacity="0.15"/>
<ellipse cx="130.7" cy="288.5" rx="6.7" ry="1.1" fill="#e8f4f0" opacity="0.18"/>
<ellipse cx="120.8" cy="207.1" rx="6.8" ry="0.5" fill="#e8f4f0" opacity="0.10"/>
<ellipse cx="13.4" cy="254.5" rx="6.0" ry="0.6" fill="#e8f4f0" opacity="0.09"/>
<ellipse cx="159.8" cy="272.7" rx="9.4" ry="0.7" fill="#e8f4f0" opacity="0.11"/>
<ellipse cx="55.7" cy="214.8" rx="5.3" ry="0.8" fill="#e8f4f0" opacity="0.12"/>
<ellipse cx="182.7" cy="287.1" rx="8.4" ry="0.7" fill="#e8f4f0" opacity="0.22"/>
<ellipse cx="58.8" cy="200.3" rx="4.0" ry="0.8" fill="#e8f4f0" opacity="0.15"/>
<ellipse cx="95.5" cy="178.3" rx="8.0" ry="0.5" fill="#e8f4f0" opacity="0.12"/>
<ellipse cx="17.1" cy="206.3" rx="4.3" ry="0.5" fill="#e8f4f0" opacity="0.12"/>
<ellipse cx="44.2" cy="232.6" rx="8.2" ry="1.0" fill="#e8f4f0" opacity="0.17"/>
<ellipse cx="136.0" cy="274.0" rx="7.1" ry="0.7" fill="#e8f4f0" opacity="0.22"/>
<ellipse cx="28.4" cy="252.1" rx="9.1" ry="0.5" fill="#e8f4f0" opacity="0.20"/>
<ellipse cx="169.5" cy="238.5" rx="9.9" ry="1.1" fill="#e8f4f0" opacity="0.10"/>
<ellipse cx="99.5" cy="221.1" rx="10.7" ry="1.1" fill="#e8f4f0" opacity="0.20"/>
<ellipse cx="111.0" cy="275.9" rx="9.5" ry="1.0" fill="#e8f4f0" opacity="0.11"/>
<ellipse cx="5.9" cy="168.8" rx="6.9" ry="0.6" fill="#e8f4f0" opacity="0.20"/>
<ellipse cx="106.1" cy="238.5" rx="9.0" ry="1.0" fill="#e8f4f0" opacity="0.15"/>
<ellipse cx="0.6" cy="262.5" rx="10.0" ry="0.9" fill="#e8f4f0" opacity="0.15"/>
<ellipse cx="125.3" cy="159.3" rx="9.9" ry="0.7" fill="#e8f4f0" opacity="0.09"/>
<ellipse cx="50.5" cy="252.8" rx="5.6" ry="1.0" fill="#e8f4f0" opacity="0.22"/>
<ellipse cx="93.9" cy="203.9" rx="7.8" ry="1.0" fill="#e8f4f0" opacity="0.19"/>
<ellipse cx="117.2" cy="240.6" rx="4.6" ry="0.6" fill="#e8f4f0" opacity="0.12"/>
<ellipse cx="141.2" cy="192.9" rx="8.5" ry="0.5" fill="#e8f4f0" opacity="0.09"/>
<ellipse cx="51.1" cy="244.8" rx="9.5" ry="1.0" fill="#e8f4f0" opacity="0.12"/>
<ellipse cx="98.1" cy="215.5" rx="7.7" ry="0.6" fill="#e8f4f0" opacity="0.21"/>
<ellipse cx="37.9" cy="287.9" rx="11.5" ry="0.5" fill="#e8f4f0" opacity="0.14"/>
<ellipse cx="155.8" cy="286.5" rx="7.6" ry="0.7" fill="#e8f4f0" opacity="0.11"/>
<ellipse cx="179.7" cy="179.7" rx="8.7" ry="0.6" fill="#e8f4f0" opacity="0.15"/>
<ellipse cx="181.0" cy="168.7" rx="10.6" ry="0.9" fill="#e8f4f0" opacity="0.20"/>
<ellipse cx="133.6" cy="182.6" rx="11.2" ry="0.8" fill="#e8f4f0" opacity="0.08"/>
<ellipse cx="0.7" cy="219.3" rx="7.6" ry="0.7" fill="#e8f4f0" opacity="0.10"/>
<ellipse cx="65.4" cy="194.6" rx="10.7" ry="0.5" fill="#e8f4f0" opacity="0.19"/>
<ellipse cx="159.4" cy="166.9" rx="11.4" ry="1.0" fill="#e8f4f0" opacity="0.21"/>
<ellipse cx="55.1" cy="202.5" rx="7.1" ry="1.2" fill="#e8f4f0" opacity="0.16"/>
<ellipse cx="68.5" cy="210.4" rx="6.2" ry="0.5" fill="#e8f4f0" opacity="0.09"/>
<ellipse cx="158.6" cy="190.3" rx="11.5" ry="0.7" fill="#e8f4f0" opacity="0.12"/>
<ellipse cx="97.1" cy="176.8" rx="7.0" ry="1.2" fill="#e8f4f0" opacity="0.20"/>
<ellipse cx="154.3" cy="239.0" rx="11.3" ry="1.2" fill="#e8f4f0" opacity="0.16"/>
<ellipse cx="136.7" cy="157.0" rx="9.9" ry="0.8" fill="#e8f4f0" opacity="0.19"/>
<ellipse cx="122.5" cy="190.4" rx="4.4" ry="1.1" fill="#e8f4f0" opacity="0.10"/>
<ellipse cx="89.7" cy="198.5" rx="6.4" ry="1.0" fill="#e8f4f0" opacity="0.22"/>
<ellipse cx="49.4" cy="242.5" rx="6.4" ry="0.9" fill="#e8f4f0" opacity="0.14"/>
<ellipse cx="31.8" cy="172.8" rx="5.7" ry="1.1" fill="#e8f4f0" opacity="0.15"/>
<ellipse cx="41.8" cy="277.8" rx="12.0" ry="0.8" fill="#e8f4f0" opacity="0.10"/>
<ellipse cx="36.6" cy="162.8" rx="6.7" ry="0.6" fill="#e8f4f0" opacity="0.11"/>
<ellipse cx="49.1" cy="230.3" rx="11.1" ry="1.0" fill="#e8f4f0" opacity="0.14"/>
<ellipse cx="78.6" cy="223.9" rx="7.0" ry="0.7" fill="#e8f4f0" opacity="0.09"/>
<ellipse cx="52.7" cy="286.4" rx="5.0" ry="0.9" fill="#e8f4f0" opacity="0.17"/>
<ellipse cx="163.9" cy="180.5" rx="6.2" ry="0.7" fill="#e8f4f0" opacity="0.14"/>
<ellipse cx="84.7" cy="284.5" rx="10.8" ry="1.1" fill="#e8f4f0" opacity="0.08"/>
<ellipse cx="6.1" cy="250.0" rx="11.2" ry="0.8" fill="#e8f4f0" opacity="0.16"/>
<ellipse cx="0.0" cy="205.2" rx="11.4" ry="1.1" fill="#e8f4f0" opacity="0.20"/></g>
<!-- sand -->
<path d="M84 146 C130 147 200 151 302 157 V188 C265 181 210 170 160 160 C125 153 100 149 84 149 Z" fill="#d6cfcb" filter="url(#b1)"/>
<!-- tree masses -->
<g filter="url(#b2)">
<path d="M62 148 C70 135 85 128 100 126 C120 122 135 124 150 120 C175 112 200 108 225 104 C245 98 260 80 270 66 C285 58 295 56 302 56 V158 C250 152 180 148 84 148 Z" fill="#2f4222"/>
<circle cx="99.4" cy="135.4" r="7.7" fill="#5a6a30"/>
<circle cx="99.4" cy="142.5" r="4.8" fill="#5a6a30"/>
<circle cx="110.9" cy="141.0" r="4.4" fill="#2e4020"/>
<circle cx="79.2" cy="134.9" r="7.6" fill="#3a4c24"/>
<circle cx="108.7" cy="131.5" r="5.8" fill="#4a5a2a"/>
<circle cx="110.5" cy="142.0" r="4.3" fill="#3a4c24"/>
<circle cx="82.4" cy="127.8" r="4.1" fill="#5a6a30"/>
<circle cx="91.2" cy="136.2" r="4.8" fill="#4a5a2a"/>
<circle cx="111.6" cy="134.0" r="6.6" fill="#5a6a30"/>
<circle cx="112.6" cy="131.8" r="6.2" fill="#3a4c24"/>
<circle cx="116.0" cy="129.6" r="4.9" fill="#2e4020"/>
<circle cx="71.9" cy="135.5" r="4.4" fill="#3a4c24"/>
<circle cx="125.0" cy="131.3" r="7.8" fill="#3a4c24"/>
<circle cx="83.9" cy="144.2" r="4.2" fill="#5a6a30"/>
<circle cx="133.7" cy="131.5" r="4.3" fill="#4a5a2a"/>
<circle cx="120.6" cy="128.5" r="4.3" fill="#2e4020"/>
<circle cx="71.0" cy="131.8" r="7.7" fill="#4a5a2a"/>
<circle cx="86.0" cy="124.4" r="4.2" fill="#5a6a30"/>
<circle cx="81.5" cy="135.4" r="5.8" fill="#4a5a2a"/>
<circle cx="134.0" cy="140.5" r="5.7" fill="#5a6a30"/>
<circle cx="77.6" cy="132.1" r="4.9" fill="#2e4020"/>
<circle cx="126.2" cy="145.4" r="6.4" fill="#3a4c24"/>
<circle cx="83.7" cy="131.5" r="7.4" fill="#3a4c24"/>
<circle cx="72.7" cy="125.5" r="5.8" fill="#3a4c24"/>
<circle cx="120.2" cy="129.9" r="5.2" fill="#3a4c24"/>
<circle cx="142.1" cy="114.4" r="8.2" fill="#2a3e1e"/>
<circle cx="192.1" cy="121.7" r="7.3" fill="#24361a"/>
<circle cx="214.1" cy="111.1" r="6.9" fill="#3a5026"/>
<circle cx="164.5" cy="115.3" r="8.1" fill="#3a5026"/>
<circle cx="150.1" cy="133.3" r="7.8" fill="#24361a"/>
<circle cx="218.8" cy="132.2" r="7.1" fill="#2a3e1e"/>
<circle cx="145.4" cy="128.1" r="6.3" fill="#24361a"/>
<circle cx="159.4" cy="142.1" r="8.0" fill="#46582a"/>
<circle cx="184.4" cy="146.8" r="9.9" fill="#3a5026"/>
<circle cx="156.7" cy="130.2" r="9.3" fill="#2a3e1e"/>
<circle cx="161.6" cy="146.3" r="6.0" fill="#2a3e1e"/>
<circle cx="141.6" cy="123.5" r="6.2" fill="#2a3e1e"/>
<circle cx="151.7" cy="121.6" r="7.9" fill="#3a5026"/>
<circle cx="143.8" cy="111.2" r="7.3" fill="#46582a"/>
<circle cx="197.4" cy="136.1" r="7.9" fill="#3a5026"/>
<circle cx="191.0" cy="146.6" r="7.4" fill="#46582a"/>
<circle cx="201.6" cy="148.3" r="5.1" fill="#2a3e1e"/>
<circle cx="180.8" cy="137.9" r="6.6" fill="#2a3e1e"/>
<circle cx="142.1" cy="129.6" r="8.7" fill="#3a5026"/>
<circle cx="210.4" cy="146.2" r="6.8" fill="#24361a"/>
<circle cx="220.6" cy="144.2" r="7.1" fill="#2a3e1e"/>
<circle cx="217.0" cy="130.8" r="8.1" fill="#24361a"/>
<circle cx="171.0" cy="105.6" r="5.4" fill="#2a3e1e"/>
<circle cx="195.7" cy="149.7" r="9.4" fill="#46582a"/>
<circle cx="171.9" cy="138.1" r="7.9" fill="#24361a"/>
<circle cx="178.9" cy="129.4" r="7.6" fill="#2a3e1e"/>
<circle cx="164.5" cy="108.9" r="5.1" fill="#2a3e1e"/>
<circle cx="182.2" cy="132.7" r="9.6" fill="#46582a"/>
<circle cx="220.2" cy="121.6" r="5.7" fill="#3a5026"/>
<circle cx="184.2" cy="138.9" r="6.7" fill="#24361a"/>
<circle cx="278.4" cy="81.7" r="7.4" fill="#36522a"/>
<circle cx="264.3" cy="98.8" r="9.8" fill="#2c4620"/>
<circle cx="296.4" cy="94.6" r="8.5" fill="#36522a"/>
<circle cx="264.9" cy="72.1" r="7.1" fill="#203418"/>
<circle cx="288.4" cy="145.5" r="6.7" fill="#2c4620"/>
<circle cx="260.3" cy="102.4" r="10.6" fill="#1c2e16"/>
<circle cx="273.0" cy="106.8" r="9.0" fill="#46602e"/>
<circle cx="276.3" cy="66.7" r="5.2" fill="#46602e"/>
<circle cx="256.9" cy="123.8" r="8.4" fill="#36522a"/>
<circle cx="285.5" cy="110.8" r="8.8" fill="#1c2e16"/>
<circle cx="276.4" cy="62.2" r="10.0" fill="#2c4620"/>
<circle cx="291.6" cy="131.7" r="10.9" fill="#203418"/>
<circle cx="276.0" cy="116.7" r="8.9" fill="#36522a"/>
<circle cx="300.0" cy="121.6" r="6.2" fill="#1c2e16"/>
<circle cx="267.0" cy="124.3" r="9.5" fill="#46602e"/>
<circle cx="288.6" cy="76.1" r="6.6" fill="#36522a"/>
<circle cx="280.4" cy="145.2" r="8.0" fill="#2c4620"/>
<circle cx="273.5" cy="131.3" r="10.4" fill="#203418"/>
<circle cx="274.3" cy="140.3" r="7.3" fill="#1c2e16"/>
<circle cx="276.3" cy="116.3" r="10.5" fill="#1c2e16"/>
<circle cx="280.9" cy="118.7" r="8.0" fill="#36522a"/>
<circle cx="276.8" cy="118.6" r="6.2" fill="#203418"/>
<circle cx="265.0" cy="141.0" r="10.9" fill="#36522a"/>
<circle cx="280.2" cy="131.2" r="6.9" fill="#203418"/>
<circle cx="271.4" cy="67.4" r="7.6" fill="#46602e"/>
<circle cx="274.8" cy="84.8" r="10.5" fill="#2c4620"/>
<circle cx="293.0" cy="65.8" r="9.8" fill="#2c4620"/>
<circle cx="280.1" cy="121.8" r="10.5" fill="#1c2e16"/>
<circle cx="262.0" cy="106.5" r="9.3" fill="#1c2e16"/>
<circle cx="299.5" cy="104.3" r="10.7" fill="#203418"/>
<circle cx="250.6" cy="119.2" r="7.2" fill="#24381a"/>
<circle cx="239.6" cy="141.4" r="7.2" fill="#30461f"/>
<circle cx="246.6" cy="147.5" r="8.5" fill="#24381a"/>
<circle cx="229.3" cy="102.8" r="7.2" fill="#30461f"/>
<circle cx="241.9" cy="106.1" r="7.1" fill="#24381a"/>
<circle cx="243.4" cy="96.5" r="8.9" fill="#30461f"/>
<circle cx="240.6" cy="149.4" r="5.5" fill="#24381a"/>
<circle cx="247.5" cy="98.6" r="7.2" fill="#30461f"/>
<circle cx="258.3" cy="139.0" r="6.6" fill="#24381a"/>
<circle cx="237.2" cy="102.0" r="6.7" fill="#30461f"/>
<circle cx="239.7" cy="101.0" r="6.7" fill="#24381a"/>
<circle cx="258.5" cy="102.1" r="8.1" fill="#24381a"/>
<circle cx="84.3" cy="104.7" r="3.0" fill="#a08834"/>
<circle cx="118.6" cy="110.7" r="4.9" fill="#b89a3a"/>
<circle cx="140.0" cy="117.5" r="5.6" fill="#c8a640"/>
<circle cx="110.1" cy="105.9" r="4.6" fill="#a08834"/>
<circle cx="82.8" cy="119.0" r="5.5" fill="#c8a640"/>
<circle cx="99.2" cy="106.1" r="4.9" fill="#c8a640"/>
<circle cx="106.2" cy="106.5" r="4.6" fill="#c8a640"/>
<circle cx="182.8" cy="107.0" r="5.2" fill="#a08834"/>
<circle cx="188.3" cy="109.5" r="3.9" fill="#b89a3a"/>
<circle cx="106.2" cy="130.0" r="5.7" fill="#b89a3a"/>
</g>
<g filter="url(#b1b)">

<path d="M70 146 Q73.0 130.5 72 115" stroke="#5a4a30" stroke-width="1" fill="none"/>
<path d="M72.0 112.0 Q67.9 117.6 67.0 128.8 Q71.1 118.5 72.0 112.0 Z" fill="#8a7a3a"/>
<path d="M72.0 112.0 Q65.3 113.3 60.7 123.8 Q67.4 115.3 72.0 112.0 Z" fill="#8a7a3a"/>
<path d="M72.0 112.0 Q64.2 109.1 58.1 118.5 Q65.9 112.9 72.0 112.0 Z" fill="#8a7a3a"/>
<path d="M72.0 112.0 Q67.2 104.0 60.8 106.9 Q65.6 107.4 72.0 112.0 Z" fill="#c8a040"/>
<path d="M72.0 112.0 Q71.4 101.9 67.4 97.7 Q68.0 103.0 72.0 112.0 Z" fill="#8a7a3a"/>
<path d="M72.0 112.0 Q76.0 105.5 76.5 101.7 Q72.5 104.0 72.0 112.0 Z" fill="#8a7a3a"/>
<path d="M72.0 112.0 Q77.7 108.6 81.9 108.1 Q76.2 104.9 72.0 112.0 Z" fill="#8a7a3a"/>
<path d="M72.0 112.0 Q79.7 112.4 89.0 119.8 Q81.3 109.0 72.0 112.0 Z" fill="#8a7a3a"/>
<path d="M72.0 112.0 Q77.9 116.1 86.3 127.0 Q80.4 113.8 72.0 112.0 Z" fill="#8a7a3a"/>
<path d="M72.0 112.0 Q72.5 117.7 75.9 126.4 Q75.4 116.9 72.0 112.0 Z" fill="#c8a040"/>
<path d="M84 146 Q83.0 129.0 86 112" stroke="#5a4a30" stroke-width="1" fill="none"/>
<path d="M88.0 110.0 Q82.4 114.9 80.4 127.3 Q86.0 116.5 88.0 110.0 Z" fill="#d8b048"/>
<path d="M88.0 110.0 Q80.1 111.7 74.9 124.3 Q82.7 114.1 88.0 110.0 Z" fill="#9a8a40"/>
<path d="M88.0 110.0 Q78.2 106.1 69.8 117.0 Q79.6 109.8 88.0 110.0 Z" fill="#9a8a40"/>
<path d="M88.0 110.0 Q81.9 100.4 74.2 103.6 Q80.3 104.0 88.0 110.0 Z" fill="#d8b048"/>
<path d="M88.0 110.0 Q88.1 99.0 84.0 93.7 Q83.9 100.0 88.0 110.0 Z" fill="#9a8a40"/>
<path d="M88.0 110.0 Q92.5 102.8 93.1 98.6 Q88.7 101.1 88.0 110.0 Z" fill="#9a8a40"/>
<path d="M88.0 110.0 Q94.1 106.3 98.6 105.7 Q92.5 102.4 88.0 110.0 Z" fill="#9a8a40"/>
<path d="M88.0 110.0 Q96.2 109.1 105.5 115.4 Q97.3 105.6 88.0 110.0 Z" fill="#d8b048"/>
<path d="M88.0 110.0 Q94.1 114.4 103.2 125.5 Q97.1 111.4 88.0 110.0 Z" fill="#d8b048"/>
<path d="M88.0 110.0 Q88.6 116.0 92.9 125.1 Q92.4 114.7 88.0 110.0 Z" fill="#d8b048"/>
<path d="M98 147 Q101.0 127.5 100 108" stroke="#5a4a30" stroke-width="1.1" fill="none"/>
<path d="M104.0 106.0 Q97.6 112.4 94.8 127.6 Q101.2 113.9 104.0 106.0 Z" fill="#a08a40"/>
<path d="M104.0 106.0 Q96.4 107.7 91.9 120.0 Q99.5 110.4 104.0 106.0 Z" fill="#e0b850"/>
<path d="M104.0 106.0 Q94.8 103.1 87.4 113.9 Q96.6 106.8 104.0 106.0 Z" fill="#e0b850"/>
<path d="M104.0 106.0 Q96.1 97.7 87.7 103.5 Q95.6 101.4 104.0 106.0 Z" fill="#a08a40"/>
<path d="M104.0 106.0 Q104.2 96.2 100.6 91.5 Q100.4 97.1 104.0 106.0 Z" fill="#a08a40"/>
<path d="M104.0 106.0 Q108.8 97.1 109.9 92.0 Q105.1 95.5 104.0 106.0 Z" fill="#a08a40"/>
<path d="M104.0 106.0 Q111.6 102.1 118.6 103.6 Q111.0 98.3 104.0 106.0 Z" fill="#a08a40"/>
<path d="M104.0 106.0 Q111.2 106.1 119.9 111.5 Q112.7 101.7 104.0 106.0 Z" fill="#a08a40"/>
<path d="M104.0 106.0 Q108.6 110.1 116.1 119.4 Q111.5 107.5 104.0 106.0 Z" fill="#a08a40"/>
<path d="M104.0 106.0 Q106.4 113.2 112.6 125.4 Q110.2 111.5 104.0 106.0 Z" fill="#e0b850"/>
<path d="M120.0 112.0 Q114.7 117.3 113.4 129.5 Q118.7 118.7 120.0 112.0 Z" fill="#d8b048"/>
<path d="M120.0 112.0 Q111.3 113.8 104.9 127.4 Q113.6 116.1 120.0 112.0 Z" fill="#d8b048"/>
<path d="M120.0 112.0 Q110.2 108.0 101.6 118.7 Q111.4 111.4 120.0 112.0 Z" fill="#8a8038"/>
<path d="M120.0 112.0 Q114.7 104.2 108.1 107.8 Q113.4 107.8 120.0 112.0 Z" fill="#d8b048"/>
<path d="M120.0 112.0 Q118.9 102.1 114.5 98.8 Q115.6 103.5 120.0 112.0 Z" fill="#d8b048"/>
<path d="M120.0 112.0 Q124.3 105.4 125.0 101.4 Q120.7 103.6 120.0 112.0 Z" fill="#8a8038"/>
<path d="M120.0 112.0 Q126.4 108.1 131.3 107.6 Q124.8 104.0 120.0 112.0 Z" fill="#d8b048"/>
<path d="M120.0 112.0 Q127.2 111.8 135.7 117.2 Q128.5 107.8 120.0 112.0 Z" fill="#d8b048"/>
<path d="M120.0 112.0 Q125.0 116.2 133.2 125.6 Q128.2 113.1 120.0 112.0 Z" fill="#d8b048"/>
<path d="M120.0 112.0 Q120.4 118.2 124.4 127.8 Q124.0 117.2 120.0 112.0 Z" fill="#8a8038"/>
<path d="M136.0 110.0 Q130.9 114.7 129.0 126.4 Q134.2 116.1 136.0 110.0 Z" fill="#c8a840"/>
<path d="M136.0 110.0 Q128.6 111.0 124.4 122.5 Q131.8 114.0 136.0 110.0 Z" fill="#7a7a38"/>
<path d="M136.0 110.0 Q128.0 107.1 121.9 116.8 Q129.9 111.1 136.0 110.0 Z" fill="#7a7a38"/>
<path d="M136.0 110.0 Q131.3 102.5 125.2 105.2 Q129.9 105.6 136.0 110.0 Z" fill="#c8a840"/>
<path d="M136.0 110.0 Q136.2 101.5 132.7 97.8 Q132.6 102.5 136.0 110.0 Z" fill="#c8a840"/>
<path d="M136.0 110.0 Q140.2 102.5 140.2 97.7 Q135.9 101.0 136.0 110.0 Z" fill="#c8a840"/>
<path d="M136.0 110.0 Q143.2 104.6 148.4 103.5 Q141.1 100.6 136.0 110.0 Z" fill="#7a7a38"/>
<path d="M136.0 110.0 Q143.8 110.2 153.3 116.8 Q145.5 106.0 136.0 110.0 Z" fill="#c8a840"/>
<path d="M136.0 110.0 Q141.2 114.9 149.6 126.0 Q144.4 112.2 136.0 110.0 Z" fill="#7a7a38"/>
<path d="M136.0 110.0 Q137.4 116.0 142.2 125.8 Q140.8 114.7 136.0 110.0 Z" fill="#c8a840"/>
<path d="M146 150 Q150.0 111.0 148 72" stroke="#6a5a38" stroke-width="1.4" fill="none"/>
<path d="M148.0 68.0 Q139.4 76.9 137.3 97.1 Q145.9 79.2 148.0 68.0 Z" fill="#c89a3a"/>
<path d="M148.0 68.0 Q133.3 72.6 124.1 97.3 Q138.8 77.1 148.0 68.0 Z" fill="#6a7034"/>
<path d="M148.0 68.0 Q132.4 67.0 119.6 87.6 Q135.3 71.2 148.0 68.0 Z" fill="#6a7034"/>
<path d="M148.0 68.0 Q133.3 62.7 121.3 79.7 Q136.0 68.7 148.0 68.0 Z" fill="#6a7034"/>
<path d="M148.0 68.0 Q134.0 54.5 119.4 65.5 Q133.4 60.9 148.0 68.0 Z" fill="#c89a3a"/>
<path d="M148.0 68.0 Q139.7 50.8 127.7 52.7 Q136.0 55.7 148.0 68.0 Z" fill="#6a7034"/>
<path d="M148.0 68.0 Q147.8 52.6 141.7 45.8 Q141.8 54.3 148.0 68.0 Z" fill="#6a7034"/>
<path d="M148.0 68.0 Q153.6 50.6 152.1 39.0 Q146.5 49.6 148.0 68.0 Z" fill="#6a7034"/>
<path d="M148.0 68.0 Q157.7 59.6 163.7 56.9 Q154.0 54.3 148.0 68.0 Z" fill="#6a7034"/>
<path d="M148.0 68.0 Q159.5 60.9 169.5 62.3 Q158.0 55.5 148.0 68.0 Z" fill="#6a7034"/>
<path d="M148.0 68.0 Q161.0 67.4 176.1 77.6 Q163.1 61.0 148.0 68.0 Z" fill="#c89a3a"/>
<path d="M148.0 68.0 Q158.8 71.0 172.5 84.6 Q161.7 66.6 148.0 68.0 Z" fill="#c89a3a"/>
<path d="M148.0 68.0 Q156.0 78.9 168.5 101.4 Q160.5 76.2 148.0 68.0 Z" fill="#6a7034"/>
<path d="M148.0 68.0 Q151.0 79.1 159.4 97.4 Q156.4 77.0 148.0 68.0 Z" fill="#6a7034"/>
<path d="M180 150 Q177.0 117.0 180 84" stroke="#6a5a38" stroke-width="1.4" fill="none"/>
<path d="M182.0 80.0 Q174.5 88.3 172.1 106.9 Q179.6 90.2 182.0 80.0 Z" fill="#b8983a"/>
<path d="M182.0 80.0 Q170.5 85.9 164.7 107.3 Q176.1 89.5 182.0 80.0 Z" fill="#b8983a"/>
<path d="M182.0 80.0 Q169.6 80.8 161.1 99.1 Q173.5 85.2 182.0 80.0 Z" fill="#4e6230"/>
<path d="M182.0 80.0 Q168.9 72.8 157.6 87.1 Q170.8 79.4 182.0 80.0 Z" fill="#4e6230"/>
<path d="M182.0 80.0 Q171.5 69.1 160.4 78.0 Q170.9 75.2 182.0 80.0 Z" fill="#4e6230"/>
<path d="M182.0 80.0 Q175.7 64.7 165.5 65.8 Q171.8 69.3 182.0 80.0 Z" fill="#b8983a"/>
<path d="M182.0 80.0 Q181.8 63.9 176.5 55.8 Q176.7 65.1 182.0 80.0 Z" fill="#b8983a"/>
<path d="M182.0 80.0 Q188.3 64.4 187.5 54.3 Q181.3 62.9 182.0 80.0 Z" fill="#b8983a"/>
<path d="M182.0 80.0 Q192.9 69.7 200.7 67.5 Q189.8 65.0 182.0 80.0 Z" fill="#4e6230"/>
<path d="M182.0 80.0 Q194.4 72.9 205.2 74.4 Q192.8 66.6 182.0 80.0 Z" fill="#4e6230"/>
<path d="M182.0 80.0 Q194.2 80.6 209.0 91.6 Q196.8 74.5 182.0 80.0 Z" fill="#4e6230"/>
<path d="M182.0 80.0 Q193.4 83.1 207.6 97.7 Q196.2 78.9 182.0 80.0 Z" fill="#b8983a"/>
<path d="M182.0 80.0 Q187.3 87.7 197.0 102.8 Q191.7 84.8 182.0 80.0 Z" fill="#b8983a"/>
<path d="M182.0 80.0 Q183.0 89.8 188.8 105.1 Q187.9 88.5 182.0 80.0 Z" fill="#4e6230"/>
<path d="M202 152 Q205.0 128.0 200 104" stroke="#a09078" stroke-width="1.5" fill="none"/>
<path d="M204.0 100.0 Q196.5 110.9 195.2 132.1 Q202.8 112.6 204.0 100.0 Z" fill="#4e6a2e"/>
<path d="M204.0 100.0 Q190.5 103.9 182.2 126.2 Q195.7 108.2 204.0 100.0 Z" fill="#c89838"/>
<path d="M204.0 100.0 Q189.2 98.7 178.3 118.7 Q193.1 104.1 204.0 100.0 Z" fill="#c89838"/>
<path d="M204.0 100.0 Q188.3 92.8 174.1 108.9 Q189.8 97.8 204.0 100.0 Z" fill="#c89838"/>
<path d="M204.0 100.0 Q191.7 87.5 178.7 96.6 Q191.0 93.0 204.0 100.0 Z" fill="#c89838"/>
<path d="M204.0 100.0 Q197.2 84.5 186.4 86.8 Q193.2 89.9 204.0 100.0 Z" fill="#c89838"/>
<path d="M204.0 100.0 Q203.7 84.7 197.8 77.8 Q198.1 86.2 204.0 100.0 Z" fill="#c89838"/>
<path d="M204.0 100.0 Q209.1 85.1 207.0 74.9 Q201.9 84.2 204.0 100.0 Z" fill="#c89838"/>
<path d="M204.0 100.0 Q213.6 91.6 219.2 88.6 Q209.6 86.3 204.0 100.0 Z" fill="#4e6a2e"/>
<path d="M204.0 100.0 Q216.1 94.8 227.8 98.6 Q215.7 88.7 204.0 100.0 Z" fill="#4e6a2e"/>
<path d="M204.0 100.0 Q214.7 100.6 227.7 110.8 Q216.9 95.8 204.0 100.0 Z" fill="#4e6a2e"/>
<path d="M204.0 100.0 Q214.1 105.7 228.3 122.1 Q218.2 101.2 204.0 100.0 Z" fill="#4e6a2e"/>
<path d="M204.0 100.0 Q211.4 107.5 223.2 124.1 Q215.7 104.1 204.0 100.0 Z" fill="#4e6a2e"/>
<path d="M204.0 100.0 Q206.1 110.3 214.3 126.7 Q212.2 107.9 204.0 100.0 Z" fill="#4e6a2e"/>
<path d="M259 160 Q256.5 110.0 238 60" stroke="#b8b0a0" stroke-width="2.2" fill="none"/>
<path d="M236.0 42.0 Q224.4 59.9 219.6 94.3 Q231.3 62.1 236.0 42.0 Z" fill="#34462a"/>
<path d="M236.0 42.0 Q219.5 53.0 208.7 85.2 Q225.2 56.5 236.0 42.0 Z" fill="#44582e"/>
<path d="M236.0 42.0 Q215.5 48.7 199.9 81.4 Q220.4 53.2 236.0 42.0 Z" fill="#44582e"/>
<path d="M236.0 42.0 Q210.8 44.0 189.5 77.7 Q214.7 49.2 236.0 42.0 Z" fill="#34462a"/>
<path d="M236.0 42.0 Q211.0 35.4 189.0 62.0 Q213.9 42.2 236.0 42.0 Z" fill="#34462a"/>
<path d="M236.0 42.0 Q214.0 26.7 192.3 43.7 Q214.3 34.1 236.0 42.0 Z" fill="#34462a"/>
<path d="M236.0 42.0 Q219.7 21.4 200.7 29.6 Q217.0 29.0 236.0 42.0 Z" fill="#34462a"/>
<path d="M236.0 42.0 Q224.0 20.4 208.1 22.1 Q220.1 25.9 236.0 42.0 Z" fill="#34462a"/>
<path d="M236.0 42.0 Q229.8 11.8 216.1 1.7 Q222.2 15.6 236.0 42.0 Z" fill="#44582e"/>
<path d="M236.0 42.0 Q234.6 17.3 226.8 4.5 Q228.2 18.9 236.0 42.0 Z" fill="#34462a"/>
<path d="M236.0 42.0 Q245.2 13.7 247.7 -3.3 Q238.6 12.0 236.0 42.0 Z" fill="#34462a"/>
<path d="M236.0 42.0 Q248.1 19.6 252.9 7.6 Q240.8 16.1 236.0 42.0 Z" fill="#44582e"/>
<path d="M236.0 42.0 Q253.2 20.0 265.5 12.9 Q248.3 15.1 236.0 42.0 Z" fill="#44582e"/>
<path d="M236.0 42.0 Q257.3 28.8 277.3 33.8 Q256.1 22.8 236.0 42.0 Z" fill="#44582e"/>
<path d="M236.0 42.0 Q257.4 35.3 279.6 46.7 Q258.1 28.7 236.0 42.0 Z" fill="#34462a"/>
<path d="M236.0 42.0 Q256.0 44.7 279.7 65.2 Q259.6 38.0 236.0 42.0 Z" fill="#44582e"/>
<path d="M236.0 42.0 Q257.4 46.9 282.4 72.7 Q261.0 41.6 236.0 42.0 Z" fill="#34462a"/>
<path d="M236.0 42.0 Q247.9 54.3 266.5 79.8 Q254.6 48.9 236.0 42.0 Z" fill="#44582e"/>
<path d="M236.0 42.0 Q247.2 59.8 264.5 93.6 Q253.3 56.5 236.0 42.0 Z" fill="#34462a"/>
<path d="M236.0 42.0 Q241.5 62.5 253.4 95.8 Q248.0 60.4 236.0 42.0 Z" fill="#34462a"/>
<path d="M230.0 54.0 Q218.0 64.8 213.6 98.6 Q225.5 67.6 230.0 54.0 Z" fill="#c8a040"/>
<path d="M230.0 54.0 Q212.9 56.4 202.9 93.0 Q219.9 61.3 230.0 54.0 Z" fill="#b8923a"/>
<path d="M230.0 54.0 Q213.4 45.2 201.6 73.4 Q218.2 52.1 230.0 54.0 Z" fill="#b8923a"/>
<path d="M230.0 54.0 Q218.0 33.9 204.9 50.4 Q216.9 42.1 230.0 54.0 Z" fill="#c8a040"/>
<path d="M230.0 54.0 Q235.2 37.9 233.0 28.2 Q227.8 37.0 230.0 54.0 Z" fill="#b8923a"/>
<path d="M230.0 54.0 Q241.8 43.0 251.4 48.4 Q239.7 34.9 230.0 54.0 Z" fill="#b8923a"/>
<path d="M230.0 54.0 Q242.3 51.0 258.2 72.4 Q245.9 45.4 230.0 54.0 Z" fill="#b8923a"/>
<path d="M230.0 54.0 Q240.3 62.3 257.9 96.3 Q247.5 57.6 230.0 54.0 Z" fill="#c8a040"/>
<path d="M230.0 54.0 Q232.5 67.0 243.5 94.2 Q241.0 64.1 230.0 54.0 Z" fill="#c8a040"/>
<path d="M292 160 Q282.5 115.0 285 70" stroke="#9a9a88" stroke-width="1.2" fill="none"/>
</g>
<g filter="url(#b1)"><path d="M190 140 L205 134 L222 140 Z" fill="#6a5040"/><path d="M155 148 C162 152 170 152 176 148" stroke="#e8e0d0" stroke-width="1.5" fill="none"/>
<path d="M70 146 L70 144 M84 146 L84 144" stroke="#ddd" stroke-width=".5"/></g>
</g>
<rect x=".5" y=".5" width="301" height="290" fill="none" stroke="#101010" stroke-width="1"/>
</svg>
<div class="a tx" style="left:789.5px;top:47.5px;font-size:44px;line-height:50px;color:#f5f5f5;white-space:nowrap;transform:scaleX(.8);-webkit-text-stroke:.5px #1c1c1c;transform-origin:0 0">TITLE</div>
<svg class="a" style="left:786px;top:167px" width="214" height="73" viewBox="0 0 214 73">
<defs>
<clipPath id="t1"><rect x="0" y="0" width="71.5" height="72"/></clipPath>
<clipPath id="t2"><rect x="91" y="0" width="72" height="72"/></clipPath>
<clipPath id="t3"><rect x="182" y="0" width="40" height="72"/></clipPath>
<filter id="tb1"><feGaussianBlur stdDeviation=".6"/></filter>
</defs>
<g clip-path="url(#t1)" filter="url(#tb1)">
<rect x="0" y="0" width="72" height="72" fill="#8ec7e8"/>
<path d="M-5 55 C5 50 15 60 20 75 H-5 Z" fill="#d77ad0"/>
<path d="M12 0 H34 C30 20 32 45 40 72 H26 C20 50 15 25 12 0 Z" fill="#5ed22a"/>
<path d="M34 0 H45 C42 25 44 50 48 72 H40 C32 45 30 20 34 0 Z" fill="#dde225"/>
<path d="M45 0 H72 V40 C65 50 58 62 55 72 H48 C44 50 42 25 45 0 Z" fill="#f39c62"/>
<path d="M72 30 V72 H55 C58 62 65 50 72 30 Z" fill="#b18ae0"/>
<path d="M72 28 C64 42 58 58 56 72 L53 72 C55 55 62 40 72 22 Z" fill="#4b2a8a"/>
<path d="M50 0 L60 0 L54 6 Z" fill="#222"/>
<g fill="#ffffff" opacity=".45"><circle cx="12" cy="18" r="3"/><circle cx="22" cy="14" r="2.5"/><circle cx="26" cy="42" r="2.5"/><circle cx="52" cy="28" r="3"/><circle cx="60" cy="12" r="2"/><circle cx="8" cy="38" r="2"/><circle cx="38" cy="60" r="2"/><circle cx="62" cy="48" r="2"/></g>
</g>
<g clip-path="url(#t2)" filter="url(#tb1)">
<rect x="91" y="0" width="72" height="72" fill="#d78fe3"/>
<path d="M91 10 C100 20 108 40 115 60 L110 72 H91 Z" fill="#e07b3e"/>
<path d="M91 40 C100 45 110 55 118 72 H91 Z" fill="#6a8ee8"/>
<path d="M100 55 C110 52 120 60 128 72 H105 Z" fill="#3b6be0"/>
<path d="M140 0 H163 V30 C155 18 148 8 140 0 Z" fill="#111"/>
<g fill="#ffffff" opacity=".4"><circle cx="117" cy="25" r="6"/><circle cx="136" cy="18" r="3"/><circle cx="145" cy="55" r="6"/><circle cx="126" cy="42" r="2.5"/><circle cx="153" cy="35" r="2.5"/></g>
</g>
<g clip-path="url(#t3)" filter="url(#tb1)">
<rect x="182" y="0" width="40" height="72" fill="#b394e6"/>
<path d="M182 0 H196 C192 20 186 40 182 55 Z" fill="#f0a06c"/>
<path d="M196 0 H201 C196 25 190 50 186 72 H182 V60 C187 40 192 20 196 0 Z" fill="#3b1f7a"/>
<path d="M214 40 V72 H200 C205 60 210 50 214 40 Z" fill="#e88070"/>
<g fill="#ffffff" opacity=".45"><circle cx="207" cy="30" r="4"/><circle cx="200" cy="55" r="2.5"/><circle cx="211" cy="8" r="2.5"/></g>
</g>
</svg>

<span class="w" style="left:786px;top:277.17px;font-size:12.2px;color:#e6e6e6;word-spacing:1.05px;"><u>Lorem</u> <u>ipsum</u> dolor sit <u>amet,</u> <u>consectetuer</u></span>
<span class="w" style="left:786px;top:294.32px;font-size:12.2px;color:#e6e6e6;word-spacing:3.50px;"><u>elit,</u> sed <u>diam</u> <u>nonummy</u> <u>nibh</u> <u>euismod</u></span>
<span class="w" style="left:786px;top:311.47px;font-size:12.2px;color:#e6e6e6;word-spacing:3.27px;"><u>laoreet</u> <u>dolore</u> magna <u>aliquam</u> erat <u>volutpat.</u></span>
<span class="w" style="left:786px;top:328.62px;font-size:12.2px;color:#e6e6e6;word-spacing:1.89px;"><u>enim</u> ad minim <u>veniam,</u> <u>quis</u> <u>nostrud</u> <u>exerci</u></span>
<span class="w" style="left:786px;top:345.77px;font-size:12.2px;color:#e6e6e6;word-spacing:1.58px;"><u>lamcorper</u> <u>suscipit</u> <u>lobortis</u> <u>nisl</u> <u>ut</u> <u>aliquip</u></span>
<span class="w" style="left:786px;top:362.92px;font-size:12.2px;color:#e6e6e6;word-spacing:1.90px;"><u>modo</u> <u>consequat.</u> Duis <u>autem</u> <u>vel</u> <u>eum</u> <u>iriure</u></span>
<span class="w" style="left:786px;top:380.07px;font-size:12.2px;color:#e6e6e6;word-spacing:1.74px;"><u>hendrerit</u> in <u>vulputate</u> <u>velit</u> esse <u>molestie</u></span>
<span class="w" style="left:786px;top:397.22px;font-size:12.2px;color:#e6e6e6;word-spacing:0.38px;"><u>vel</u> <u>illum</u> <u>dolore</u> eu <u>feugiat</u> <u>nulla</u> <u>facilisis</u></span>
<span class="w" style="left:786px;top:414.37px;font-size:12.2px;color:#e6e6e6;word-spacing:0.24px;"><u>accumsan</u> et <u>iusto</u> <u>odio</u> <u>dignissim</u> qui <u>blandit</u></span>
</div>
<div class="a" style="left:187px;top:609px;width:999px;height:39px;background:#e9e9e9"></div>
<div class="a" style="left:187px;top:609px;width:999px;height:6px;background:linear-gradient(rgba(0,0,0,.42),rgba(0,0,0,.12) 50%,rgba(0,0,0,0))"></div>
<div class="a" style="left:1186px;top:77px;width:11px;height:571px;background:#fafafa"></div>
<div class="a" style="left:176px;top:648px;width:1021px;height:9.5px;background:#f9f9f9"></div>
<div class="a" style="left:2px;top:648px;width:174px;height:9.5px;background:#d3dde6"></div>
<svg class="a" style="left:178px;top:649px" width="8" height="8"><path d="M2.5 1.5 V7 M5 1.5 V7" stroke="#b9b9b9" stroke-width="1"/></svg>
<div class="a" style="left:187px;top:648.5px;width:45px;height:9px;border-right:1px solid #e0e0e0"></div>
<div class="a tx" style="left:195.5px;top:648px;font-size:8.2px;line-height:10px;color:#333">100%</div>
<svg class="a" style="left:222px;top:649px" width="6" height="9"><path d="M1 3.5 L3 1.5 L5 3.5 Z M1 5.5 L3 7.5 L5 5.5 Z" fill="#333"/></svg>
<div class="a" style="left:232px;top:648.5px;width:1px;height:9px;background:#e2e2e2"></div>
<svg class="a" style="left:234px;top:649px" width="24" height="9"><path d="M2 4.5 L8 1 V8 Z" fill="#5b86d6"/><path d="M20 4.5 L14 1 V8 Z" fill="#5b86d6"/></svg>
<svg class="a" style="left:258px;top:648.5px" width="16" height="10"><g transform="translate(5 5)"><circle r="2.8" fill="none" stroke="#444" stroke-width="1.6"/><g stroke="#444" stroke-width="1.4"><path d="M0 -4.3 V-2.5 M0 4.3 V2.5 M-4.3 0 H-2.5 M4.3 0 H2.5 M-3 -3 L-1.8 -1.8 M3 3 L1.8 1.8 M-3 3 L-1.8 1.8 M3 -3 L1.8 -1.8"/></g></g><path d="M10 4.5 H13 L11.5 6.5 Z" fill="#333"/></svg>
<div class="a" style="left:274px;top:648.5px;width:1px;height:9px;background:#e2e2e2"></div>
<div class="a" style="left:276.7px;top:650px;width:615.5px;height:6px;border-radius:3px;background:#b7b7b7"></div>
<div class="a" style="left:1px;top:657.5px;width:1198px;height:2.5px;background:#8c8c8c"></div>
</body></html>
